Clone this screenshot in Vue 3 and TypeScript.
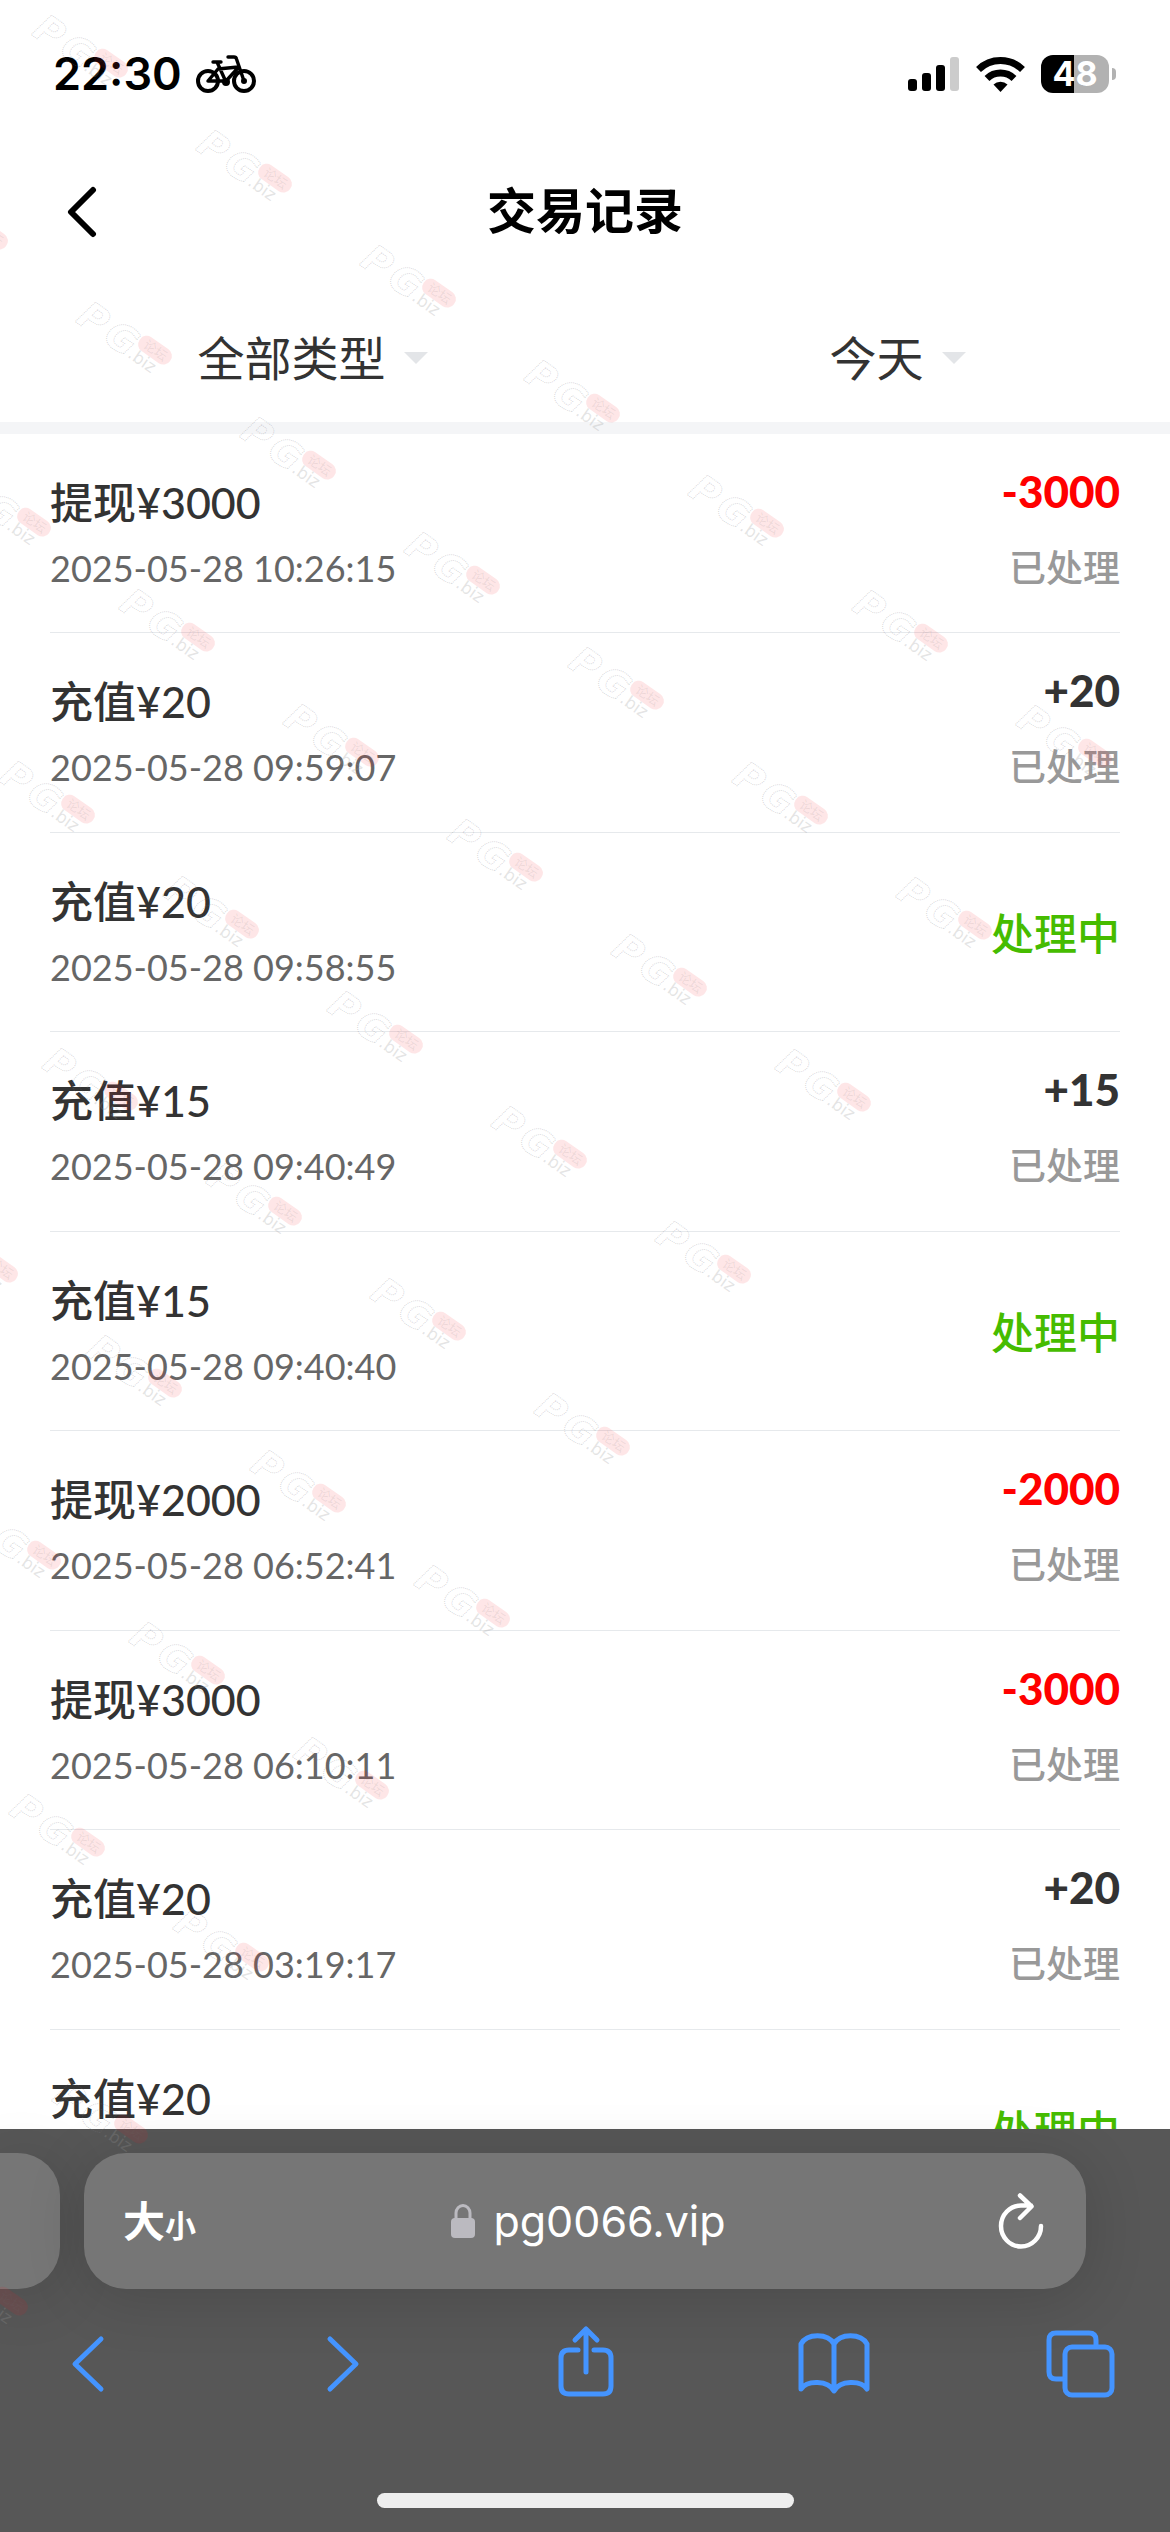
<script setup lang="ts">
import { ref } from 'vue'

interface TradeRecord {
  title: string
  time?: string
  amount?: number
}

const records: TradeRecord[] = [
  { title: '提现¥3000', time: '2025-05-28 10:26:15', amount: -3000 },
  { title: '充值¥20', time: '2025-05-28 09:59:07', amount: 20 },
  { title: '充值¥20', time: '2025-05-28 09:58:55' },
  { title: '充值¥15', time: '2025-05-28 09:40:49', amount: 15 },
  { title: '充值¥15', time: '2025-05-28 09:40:40' },
  { title: '提现¥2000', time: '2025-05-28 06:52:41', amount: -2000 },
  { title: '提现¥3000', time: '2025-05-28 06:10:11', amount: -3000 },
  { title: '充值¥20', time: '2025-05-28 03:19:17', amount: 20 },
  { title: '充值¥20' },
]

const kind = ref('全部类型')
const day = ref('今天')

const signed = (n: number): string => (n > 0 ? `+${n}` : String(n))

// Watermark stamps sit on a slanted lattice that fills the upper-left triangle.
const stamps: { x: number; y: number }[] = []
for (let row = 0; row <= 9; row++) {
  for (let col = -3; col <= 6 - row; col++) {
    const x = Math.round(33 + col * 164 + (row * 87) / 2)
    const y = 14 + col * 115 + row * 287
    if (x > -100 && y > -80) stamps.push({ x, y })
  }
}
</script>

<template>
  <div class="screen">
    <header class="status">
      <div class="status-side">
        <span class="clock">22:30</span>
        <svg class="bike" viewBox="0 0 60 40" width="60" height="40" fill="none" stroke="#000" stroke-width="4" stroke-linecap="round" stroke-linejoin="round" aria-hidden="true">
          <circle cx="12" cy="27" r="10" />
          <circle cx="48" cy="27" r="10" />
          <circle cx="30" cy="28" r="2.5" stroke-width="3" />
          <path d="M17 8h8M32 3h6q2 0 2.500 2L48 27M21 8l9 20M12 27l10-12 20-2M12 27h17M30 27l12-13" stroke-width="3.400" />
          <circle cx="48" cy="27" r="1" />
        </svg>
      </div>
      <div class="status-side">
        <svg viewBox="0 0 52 34" width="52" height="34" aria-hidden="true">
          <rect x="0" y="22" width="9" height="12" rx="3" />
          <rect x="14" y="16" width="9" height="18" rx="3" />
          <rect x="28" y="8" width="9" height="26" rx="3" />
          <rect x="42" y="0" width="9" height="34" rx="3" fill="#ccc" />
        </svg>
        <svg class="wifi" viewBox="0 0 49 36" width="49" height="36" aria-hidden="true">
          <g fill="none" stroke="#000" stroke-width="7">
            <path d="M2.500 13.500a31.500 31.500 0 0 1 44 0" />
            <path d="M11 22.500a19.500 19.500 0 0 1 27 0" />
          </g>
          <path d="M24.500 36l-7-7.500a10 10 0 0 1 14 0z" />
        </svg>
        <div class="battery"><span class="level">48</span></div>
      </div>
    </header>

    <main class="page">
      <div class="titlebar">
        <button class="back" type="button" aria-label="返回">
          <svg viewBox="0 0 30 52" width="30" height="52" fill="none" stroke="#000" stroke-width="6" stroke-linecap="round" stroke-linejoin="round"><path d="M26 4L4 26l22 22" /></svg>
        </button>
        <h1>交易记录</h1>
      </div>

      <div class="filters">
        <label class="filter">
          <select v-model="kind" aria-label="类型">
            <option>全部类型</option>
            <option>充值</option>
            <option>提现</option>
          </select>
          <i class="caret"></i>
        </label>
        <label class="filter">
          <select v-model="day" aria-label="日期">
            <option>今天</option>
            <option>昨天</option>
          </select>
          <i class="caret"></i>
        </label>
      </div>

      <ul class="records">
        <li v-for="(r, i) in records" :key="i" class="record">
          <div class="info">
            <p class="name">{{ r.title }}</p>
            <p v-if="r.time" class="time">{{ r.time }}</p>
          </div>
          <div v-if="r.amount !== undefined" class="result">
            <p class="amount" :class="{ out: r.amount < 0 }">{{ signed(r.amount) }}</p>
            <p class="state">已处理</p>
          </div>
          <p v-else class="pending">处理中</p>
        </li>
      </ul>
    </main>

    <footer class="browser">
      <div class="tabs">
        <div class="tab previous"></div>
        <div class="tab current">
          <button class="size" type="button">大<small>小</small></button>
          <button class="address" type="button">
            <svg viewBox="0 0 24 34" width="24" height="34" aria-hidden="true">
              <path d="M5 15V9a7 7.500 0 0 1 14 0v6" fill="none" stroke="#bbbac0" stroke-width="3" />
              <rect y="14" width="24" height="20" rx="4" fill="#bbbac0" />
            </svg>
            <span>pg0066.vip</span>
          </button>
          <button class="reload" type="button" aria-label="刷新">
            <svg viewBox="0 0 46 56" width="46" height="56" fill="none" stroke="#fff" stroke-width="4.500" stroke-linecap="round" stroke-linejoin="round">
              <path d="M43 33A20 20.500 0 1 1 23 12.500h10M22 2.500l11.500 11L22 25" />
            </svg>
          </button>
        </div>
      </div>
      <nav class="tools">
        <button type="button" aria-label="后退">
          <svg viewBox="0 0 80 80"><path d="M54 15L28 40l26 25" /></svg>
        </button>
        <button type="button" aria-label="前进">
          <svg viewBox="0 0 80 80"><path d="M34 15l26 25-26 25" /></svg>
        </button>
        <button type="button" aria-label="分享">
          <svg viewBox="0 0 80 80"><path d="M34 26h-9q-8 0-8 8v28q0 8 8 8h34q8 0 8-8V34q0-8-8-8h-9M42 48V5M31 16L42 5l11 11" /></svg>
        </button>
        <button type="button" aria-label="书签">
          <svg viewBox="0 0 80 80"><path d="M41 20C35 9 14 9 8 20v45c6-9 27-9 33 2 6-11 27-11 33-2V20C68 9 47 9 41 20zV66" /></svg>
        </button>
        <button type="button" aria-label="标签页">
          <svg viewBox="0 0 80 80"><rect x="24" y="23" width="47" height="48" rx="7" /><path d="M22 55h-7q-7 0-7-7V16q0-7 7-7h33q7 0 7 7v5" /></svg>
        </button>
      </nav>
      <div class="home"></div>
    </footer>

    <svg class="watermark" aria-hidden="true">
      <g v-for="(s, i) in stamps" :key="i" :transform="`translate(${s.x} ${s.y})`">
        <g transform="translate(0 22) rotate(35)">
          <text class="wm-logo" x="-3 30">PG</text>
          <text class="wm-site" x="60" y="-1">.biz</text>
          <rect class="wm-pill" x="61" y="-31" width="37" height="17" rx="8" />
          <text class="wm-forum" x="67" y="-18">论坛</text>
        </g>
      </g>
    </svg>
  </div>
</template>

<style>
body {
  background: #fff;
}
</style>

<style scoped>
.screen {
  position: relative;
  display: flex;
  flex-direction: column;
  height: 100vh;
  overflow: hidden;
  background: #fff;
  color: #333;
  font-family: Lato, "Noto Sans CJK SC", sans-serif;
}
h1, p, ul {
  margin: 0;
  padding: 0;
}
button, select {
  margin: 0;
  padding: 0;
  border: 0;
  background: none;
  color: inherit;
  font: inherit;
}
svg {
  display: block;
}

.status {
  display: flex;
  flex: none;
  align-items: center;
  justify-content: space-between;
  height: 140px;
  padding: 8px 53px 0;
  box-sizing: border-box;
  font-family: Inter, sans-serif;
}
.status-side {
  display: flex;
  align-items: center;
}
.clock {
  color: #000;
  font-size: 45px;
  font-weight: 600;
  line-height: 56px;
}
.bike {
  margin-left: 14px;
}
.wifi {
  margin: 0 16px;
}
.battery {
  position: relative;
  width: 68px;
  height: 38px;
  border-radius: 12px;
  background: linear-gradient(90deg, #000 33px, #b2b2b2 33px);
  margin-right: 8px;
}
.battery::after {
  content: "";
  position: absolute;
  top: 13px;
  right: -7px;
  width: 4px;
  height: 12px;
  border-radius: 0 4px 4px 0;
  background: #b2b2b2;
}
.level {
  display: block;
  color: #fff;
  font-size: 34px;
  font-weight: 700;
  line-height: 38px;
  text-align: center;
}

.page {
  flex: 1;
  min-height: 0;
  overflow: hidden;
}
.titlebar {
  display: grid;
  grid-template-columns: 1fr auto 1fr;
  align-items: center;
  height: 144px;
  padding: 0 67px;
}
.back {
  justify-self: start;
}
h1 {
  padding-bottom: 4px;
  color: #000;
  font-size: 49px;
  font-weight: 700;
  line-height: 72px;
}
.filters {
  display: grid;
  grid-template-columns: 1fr 1fr;
  height: 138px;
  border-bottom: 12px solid #f4f5f7;
}
.filter {
  display: flex;
  align-items: center;
  justify-content: center;
  gap: 18px;
  padding: 10px 0 0 40px;
}
.filter select {
  appearance: none;
  field-sizing: content;
  font-size: 47px;
  font-weight: 400;
  line-height: 70px;
}
.caret {
  border: 12px solid transparent;
  border-top-color: #e3e5e8;
  border-bottom: 0;
}

.records {
  padding: 0 50px;
  list-style: none;
}
.record {
  display: flex;
  justify-content: space-between;
  height: 200px;
  box-sizing: border-box;
  border-bottom: 1px solid #e6e9ec;
}
.record:nth-child(odd) {
  height: 199px;
}
.info {
  padding-top: 39px;
}
.name {
  font-size: 43px;
  font-weight: 500;
  line-height: 60px;
}
.time {
  margin-top: 11px;
  color: #666;
  font-size: 36px;
  line-height: 48px;
}
.result {
  padding-top: 27px;
  text-align: right;
}
.amount {
  font-size: 44px;
  font-weight: 900;
  line-height: 60px;
}
.amount.out {
  color: #f00;
}
.state {
  margin-top: 23px;
  color: #999;
  font-size: 37px;
  font-weight: 500;
  line-height: 48px;
}
.pending {
  align-self: center;
  padding-top: 4px;
  color: #46bc00;
  font-size: 43px;
  font-weight: 500;
  line-height: 60px;
}

.browser {
  position: relative;
  flex: none;
  padding: 24px 0;
  background: #575757;
}
.tabs {
  display: flex;
  gap: 24px;
  padding-right: 84px;
}
.tab {
  height: 136px;
  background: #767676;
  box-shadow: 0 8px 60px rgba(0, 0, 0, 0.15);
}
.previous {
  width: 60px;
  border-radius: 0 42px 42px 0;
}
.current {
  display: grid;
  flex: 1;
  grid-template-columns: 1fr auto 1fr;
  align-items: center;
  padding: 0 42px 0 39px;
  border-radius: 42px;
  color: #fff;
}
.size {
  justify-self: start;
  padding-top: 4px;
  font-size: 42px;
  font-weight: 700;
  line-height: 60px;
}
.size small {
  font-size: 31px;
}
.address {
  display: flex;
  align-items: center;
  gap: 18px;
  padding-left: 10px;
  font-family: Inter, sans-serif;
  font-size: 43px;
  line-height: 60px;
}
.reload {
  justify-self: end;
}
.tools {
  display: flex;
  justify-content: space-between;
  padding: 35px 49px 0 47px;
}
.tools svg {
  width: 80px;
  height: 80px;
  fill: none;
  stroke: #4494ff;
  stroke-width: 5px;
  stroke-linecap: round;
  stroke-linejoin: round;
}
.home {
  width: 417px;
  height: 15px;
  margin: 89px auto 0;
  border-radius: 8px;
  background: #eee;
}

/* The watermark lies over everything, browser bar included. */
.watermark {
  position: absolute;
  inset: 0;
  width: 100%;
  height: 100%;
  pointer-events: none;
}
.wm-logo {
  fill: none;
  stroke: rgba(120, 120, 130, 0.3);
  stroke-width: 1px;
  stroke-dasharray: 1 1;
  font: italic 700 38px "DejaVu Sans", sans-serif;
}
.wm-site {
  fill: rgba(150, 150, 150, 0.25);
  font: 400 17px "DejaVu Sans", sans-serif;
}
.wm-pill {
  fill: rgba(250, 30, 40, 0.11);
}
.wm-forum {
  fill: rgba(110, 110, 110, 0.12);
  font: 400 13px "Noto Sans CJK SC", sans-serif;
}
</style>
